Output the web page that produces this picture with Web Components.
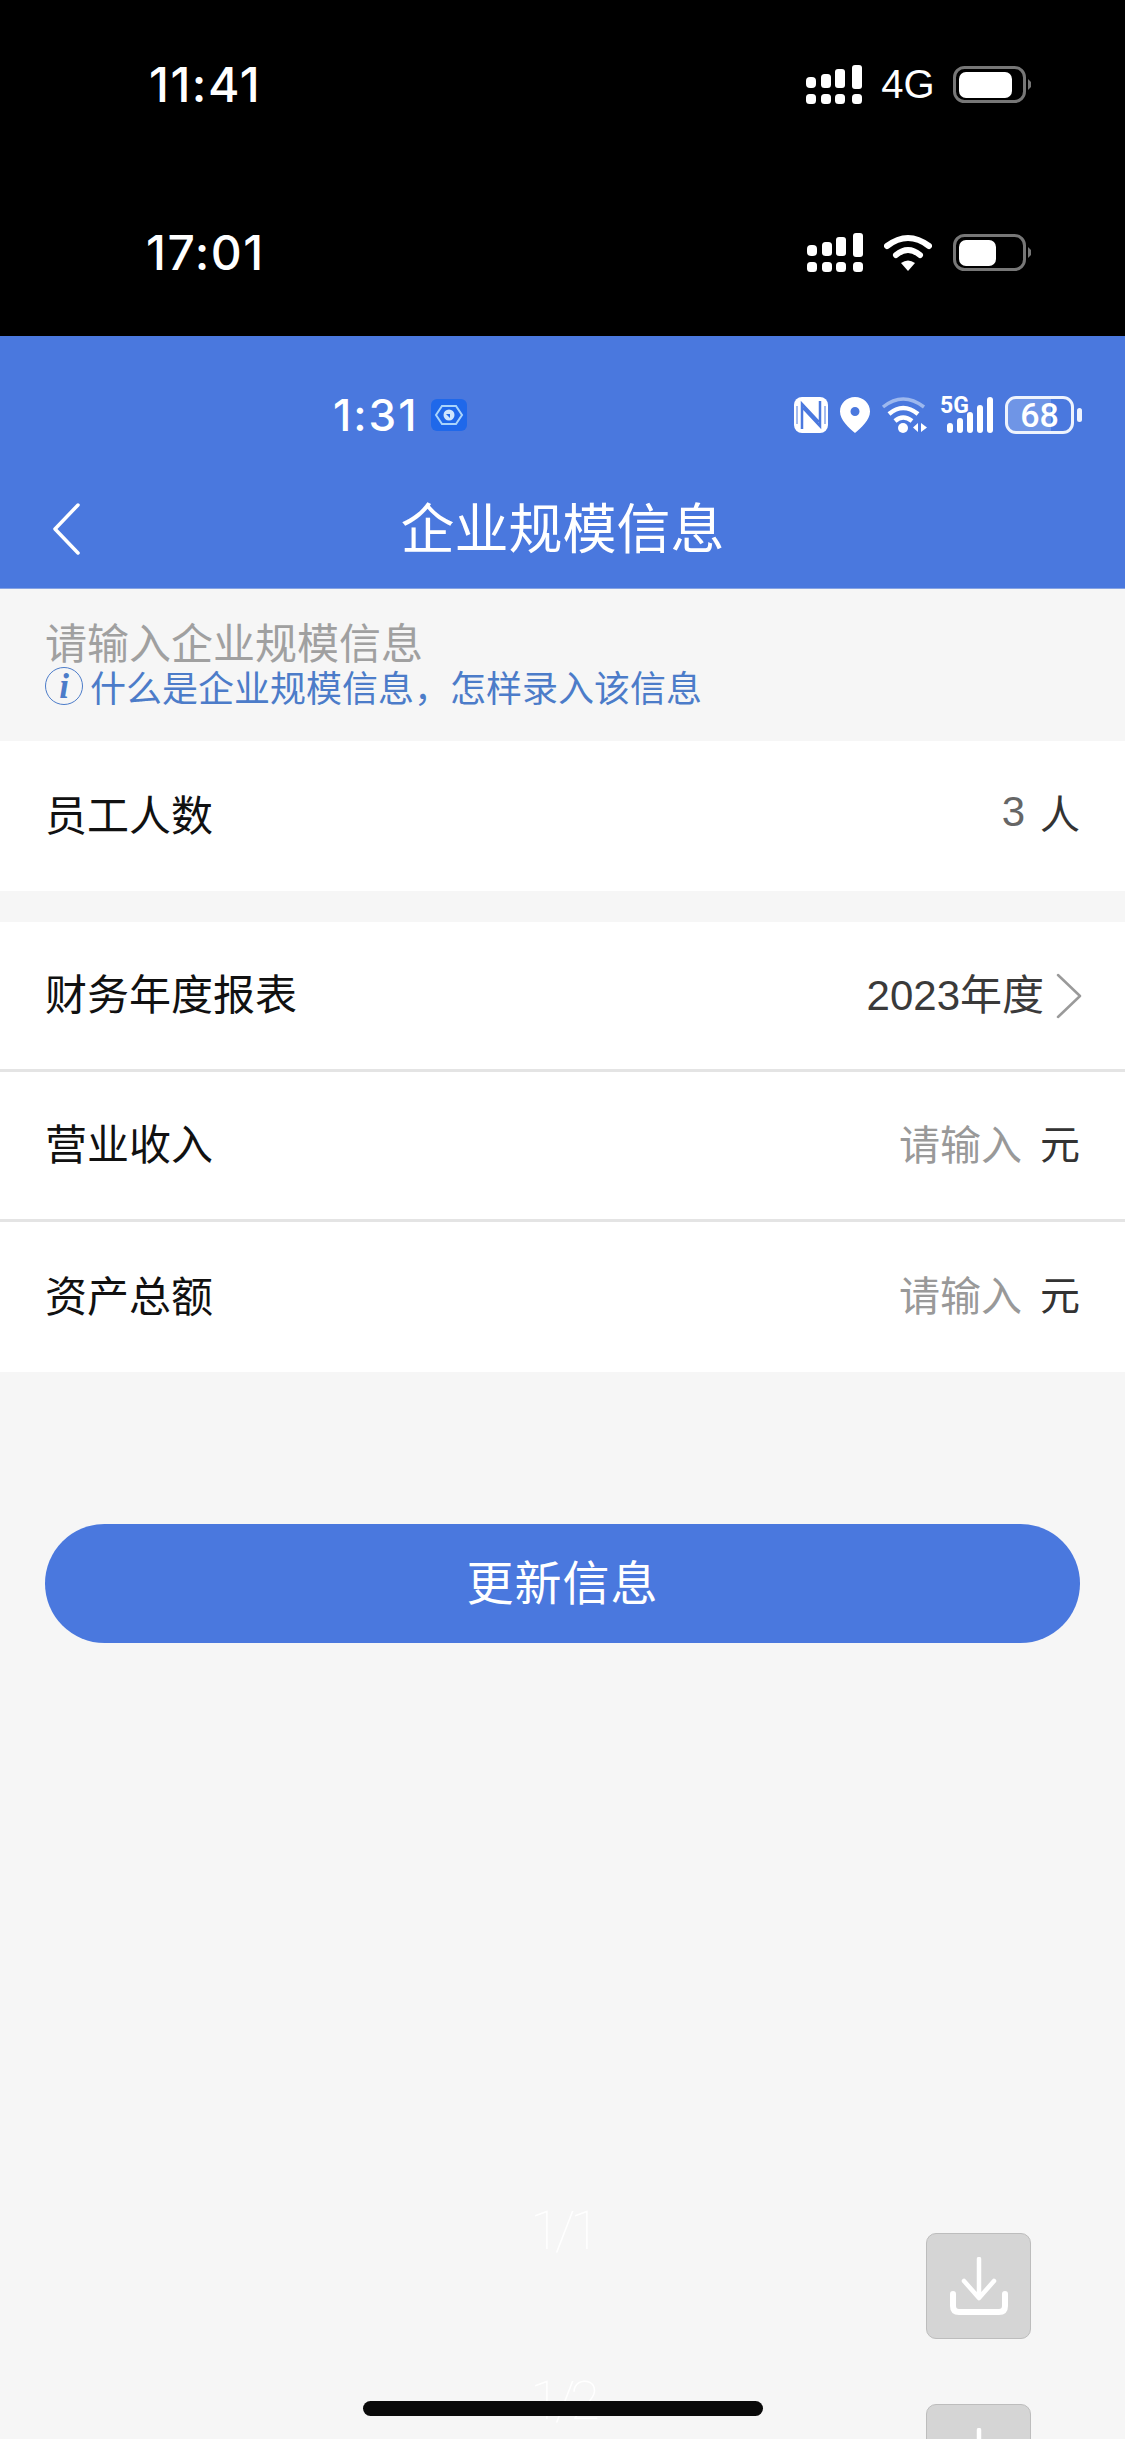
<!doctype html>
<html lang="zh">
<head>
<meta charset="utf-8">
<title>企业规模信息</title>
<style>
html, body { margin: 0; padding: 0; background: #f6f6f6; }
body { font-family: "Noto Sans CJK SC", "Noto Sans", sans-serif; }
</style>
</head>
<body>

<page-shell>
  <ios-status time="11:41" mode="cell"></ios-status>
  <ios-status time="17:01" mode="wifi"></ios-status>
  <android-status time="1:31" level="68"></android-status>
  <nav-bar>企业规模信息</nav-bar>
  <hint-block link="什么是企业规模信息，怎样录入该信息">请输入企业规模信息</hint-block>

  <form-row label="员工人数" height="150"><span class="num">3</span><span class="unit">人</span></form-row>
  <form-row label="财务年度报表" height="147" style="margin-top:31px" line chevron><span class="year">2023年度</span></form-row>
  <form-row label="营业收入" height="147" line><span class="ph">请输入</span><span class="unit">元</span></form-row>
  <form-row label="资产总额" height="150"><span class="ph">请输入</span><span class="unit">元</span></form-row>

  <pill-button>更新信息</pill-button>

  <page-count style="top:2196px">1/1</page-count>
  <page-count style="top:2366px">1/2</page-count>
  <download-tile style="top:2233px"></download-tile>
  <download-tile style="top:2404px"></download-tile>
  <home-bar></home-bar>
</page-shell>

<script>
const UI_FONT = '"Inter", "Noto Sans", sans-serif'
const CJK_FONT = '"Noto Sans CJK SC", "Noto Sans", sans-serif'

class PageShell extends HTMLElement {
  constructor() {
    super()
    this.attachShadow({mode: 'open'}).innerHTML = `
<style>
:host {
  display: flex;
  flex-direction: column;
  position: relative;
  width: 1125px;
  height: 2439px;
  overflow: hidden;
  background: #f6f6f6;
  font-family: ${CJK_FONT};
}
</style>
<slot></slot>`
  }
}
customElements.define('page-shell', PageShell)

// Black top rows: four-column signal, 4G or wifi, and a battery.
class IosStatus extends HTMLElement {
  constructor() {
    super()
    const time = this.getAttribute('time')
    const wifi = this.getAttribute('mode') == 'wifi'
    const fill = wifi ? 37 : 53
    const middle = wifi
      ? `<svg class="wifi" width="48" height="37" viewBox="0 0 48 37">
           <path d="M3 12Q24 -4 45 12" fill="none" stroke="#fff" stroke-width="6" stroke-linecap="round"/>
           <path d="M12 21Q24 11 36 21" fill="none" stroke="#fff" stroke-width="6" stroke-linecap="round"/>
           <path d="M17 29Q24 24 31 29L24 37Z" fill="#fff"/>
         </svg>`
      : `<span class="net">4G</span>`
    this.attachShadow({mode: 'open'}).innerHTML = `
<style>
:host {
  display: flex;
  align-items: center;
  box-sizing: border-box;
  flex: none;
  height: 168px;
  padding: 0 94px 0 ${wifi ? 146 : 149}px;
  background: #000;
  color: #fff;
  font-family: ${UI_FONT};
}
.time { font-size: 48px; font-weight: 500; letter-spacing: 1.500px; }
.right { margin-left: auto; display: flex; align-items: center; }
.net { display: block; width: 56px; margin-left: 18px; margin-right: 17px; font-size: 40px; font-weight: 300; font-family: "Liberation Sans", sans-serif; text-align: center; }
.wifi { margin-left: 21px; margin-right: 21px; }
svg { display: block; }
</style>
<span class="time">${time}</span>
<div class="right">
  <svg width="56" height="39" viewBox="0 0 56 39" fill="#fff">
    <rect x="0" y="12" width="10" height="11" rx="4"/>
    <rect x="15" y="9" width="10" height="14" rx="3.5"/>
    <rect x="29" y="4" width="10" height="19" rx="3"/>
    <rect x="46" y="0" width="10" height="24" rx="3"/>
    <rect x="0" y="29" width="10" height="10" rx="3.5"/>
    <rect x="15" y="29" width="10" height="10" rx="3.5"/>
    <rect x="29" y="29" width="10" height="10" rx="3.5"/>
    <rect x="46" y="29" width="10" height="10" rx="3.5"/>
  </svg>
  ${middle}
  <svg width="78" height="37" viewBox="0 0 78 37">
    <rect x="1.5" y="1.5" width="70" height="34" rx="10" fill="none" stroke="#777" stroke-width="3"/>
    <rect x="6" y="6" width="${fill}" height="26" rx="7" fill="#fff"/>
    <path d="M75 13L78 16V21L75 24Z" fill="#777"/>
  </svg>
</div>`
  }
}
customElements.define('ios-status', IosStatus)

// Second status row, on the blue header.
class AndroidStatus extends HTMLElement {
  constructor() {
    super()
    const time = this.getAttribute('time')
    const level = this.getAttribute('level')
    this.attachShadow({mode: 'open'}).innerHTML = `
<style>
:host {
  display: flex;
  align-items: center;
  box-sizing: border-box;
  flex: none;
  height: 129px;
  padding: 28px 43px 0 333px;
  background: #4a78de;
  color: #fff;
  font-family: ${UI_FONT};
}
.time { font-size: 44px; font-weight: 500; letter-spacing: 2px; }
.app { margin-left: 13px; }
.right { margin-left: auto; display: flex; align-items: center; }
svg { display: block; flex: none; }
.five { position: relative; width: 54px; height: 36px; margin-left: 12px; }
.five span { position: absolute; left: 0; top: -3px; font: 700 23px/24px "Liberation Sans Narrow", "Roboto", sans-serif; }
.five svg { position: absolute; left: 7px; top: 0; }
.batt {
  position: relative;
  box-sizing: border-box;
  width: 69px;
  height: 38px;
  margin-left: 11px;
  border: 3px solid #eef3fd;
  border-radius: 11px;
  text-align: center;
  font: 500 34px/32px "Roboto", sans-serif;
  background: linear-gradient(90deg, #6f95e6 68%, transparent 68%);
  background-clip: padding-box;
}
.tip { width: 5px; height: 14px; margin-left: 3px; border-radius: 3px; background: #eef3fd; }
</style>
<span class="time">${time}</span>
<svg class="app" width="36" height="32" viewBox="0 0 36 32">
  <rect width="36" height="32" rx="6" fill="#1f68ea"/>
  <path d="M11 7H25L31 16L25 25H11L5 16Z" fill="none" stroke="#a9d4fb" stroke-width="2"/>
  <circle cx="18" cy="16" r="5.5" fill="#cfe6fd"/>
  <path d="M15 15H19V19Z" fill="#1f68ea"/>
</svg>
<div class="right">
  <svg width="34" height="36" viewBox="0 0 34 36">
    <rect width="34" height="36" rx="8" fill="#fff"/>
    <path d="M8 32V7L25 25M26 4V29L9 11" fill="none" stroke="#4a78de" stroke-width="2.500"/>
    <path d="M3 9V27M31 9V27" stroke="#4a78de" stroke-width="1"/>
  </svg>
  <svg width="30" height="36" viewBox="0 0 30 36" style="margin-left:12px">
    <path fill-rule="evenodd" d="M15 0C23.5 0 30 6.500 30 14.500C30 23 21 31 15 36C9 31 0 23 0 14.500C0 6.500 6.500 0 15 0ZM15 10A4.500 4.500 0 1 0 15 19A4.500 4.500 0 1 0 15 10Z" fill="#fff"/>
  </svg>
  <svg width="47" height="36" viewBox="0 0 47 36" style="margin-left:11px">
    <path d="M2 10Q22 -6 43 10" fill="none" stroke="#9db8ee" stroke-width="3.500"/>
    <path d="M8 17Q22 5 37 17" fill="none" stroke="#fff" stroke-width="4.500"/>
    <path d="M14 24Q22 17 31 24" fill="none" stroke="#fff" stroke-width="4.500"/>
    <circle cx="22" cy="31" r="5" fill="#fff"/>
    <path d="M37 26L32 30.500L37 35ZM40 26L46 30.500L40 35Z" fill="#fff"/>
  </svg>
  <div class="five">
    <span>5G</span>
    <svg width="47" height="36" viewBox="0 0 47 36" fill="#fff">
      <rect x="0" y="26" width="6" height="10" rx="3"/>
      <rect x="10" y="21" width="6" height="15" rx="3"/>
      <rect x="20" y="15" width="6" height="21" rx="3"/>
      <rect x="30" y="8" width="6" height="28" rx="3"/>
      <rect x="40" y="0" width="6" height="36" rx="3"/>
    </svg>
  </div>
  <div class="batt">${level}</div>
  <div class="tip"></div>
</div>`
  }
}
customElements.define('android-status', AndroidStatus)

class NavBar extends HTMLElement {
  constructor() {
    super()
    this.attachShadow({mode: 'open'}).innerHTML = `
<style>
:host {
  display: grid;
  grid-template-columns: 1fr auto 1fr;
  align-items: center;
  box-sizing: border-box;
  flex: none;
  height: 124px;
  background: #4a78de;
  border-bottom: 1px solid #86a3e3;
  color: #fff;
}
.back { padding: 4px 0 0 51px; }
svg { display: block; }
.title { font-size: 54px; line-height: 60px; font-weight: 400; padding-bottom: 2px; }
</style>
<div class="back">
  <svg width="30" height="52" viewBox="0 0 30 52">
    <path d="M27 2L4 26L27 50" fill="none" stroke="#fff" stroke-width="3.500" stroke-linecap="round" stroke-linejoin="round"/>
  </svg>
</div>
<div class="title"><slot></slot></div>
<div></div>`
  }
}
customElements.define('nav-bar', NavBar)

class HintBlock extends HTMLElement {
  constructor() {
    super()
    this.attachShadow({mode: 'open'}).innerHTML = `
<style>
:host {
  display: block;
  box-sizing: border-box;
  flex: none;
  height: 152px;
  padding: 29px 0 0 45px;
  color: #a0a0a0;
  font-size: 42px;
  line-height: 46px;
}
.link { display: flex; align-items: center; gap: 7px; margin-top: -1px; color: #4c7cc9; font-size: 36px; line-height: 46px; }
.icon {
  display: flex;
  align-items: center;
  justify-content: center;
  box-sizing: border-box;
  width: 38px;
  height: 38px;
  border: 1.500px solid #4c7cc9;
  border-radius: 50%;
  font: italic 700 35px/1 "Liberation Serif", serif;
}
</style>
<div><slot></slot></div>
<div class="link"><span class="icon">i</span><span></span></div>`
    this.shadowRoot.querySelector('.link span:last-child').textContent = this.getAttribute('link')
  }
}
customElements.define('hint-block', HintBlock)

// One white row of the form: label on the left, slotted value on the right.
class FormRow extends HTMLElement {
  constructor() {
    super()
    const chevron = this.hasAttribute('chevron')
      ? `<svg width="26" height="46" viewBox="0 0 26 46"><path d="M2 2L24 23L2 44" fill="none" stroke="#9a9a9a" stroke-width="2.500" stroke-linecap="round" stroke-linejoin="round"/></svg>`
      : ''
    this.attachShadow({mode: 'open'}).innerHTML = `
<style>
:host {
  display: flex;
  align-items: center;
  box-sizing: border-box;
  flex: none;
  height: ${this.getAttribute('height')}px;
  padding: 0 45px 8px 45px;
  background: #fff;
  color: #111;
  font-size: 42px;
}
:host([line]) { height: ${Number(this.getAttribute('height')) + 3}px; border-bottom: 3px solid #e4e4e4; }
:host([chevron]) { padding-right: 43px; }
.value { margin-left: auto; display: flex; align-items: center; gap: 12px; }
svg { display: block; margin-top: 8px; }
::slotted(.num) { color: #666; font-family: "Liberation Sans", sans-serif; font-size: 42px; margin-right: -3px; }
::slotted(.unit) { color: #333; font-size: 40px; margin-left: 6px; }
::slotted(.year) { color: #3a3a3a; font-family: "Liberation Sans", ${CJK_FONT}; font-size: 42px; }
::slotted(.ph) { color: #999; font-size: 41px; }
</style>
<span>${this.getAttribute('label')}</span>
<div class="value"><slot></slot>${chevron}</div>`
  }
}
customElements.define('form-row', FormRow)

class PillButton extends HTMLElement {
  constructor() {
    super()
    this.attachShadow({mode: 'open'}).innerHTML = `
<style>
:host {
  display: flex;
  align-items: center;
  justify-content: center;
  box-sizing: border-box;
  flex: none;
  height: 119px;
  margin: 152px 45px 0;
  padding-bottom: 9px;
  border-radius: 60px;
  background: #4a78de;
  color: #fff;
  font-size: 47px;
  letter-spacing: 1px;
}
</style>
<slot></slot>`
  }
}
customElements.define('pill-button', PillButton)

// Pale page counter lying over the empty background.
class PageCount extends HTMLElement {
  constructor() {
    super()
    this.attachShadow({mode: 'open'}).innerHTML = `
<style>
:host {
  display: block;
  position: absolute;
  left: 0;
  right: 0;
  text-align: center;
  color: #fff;
  letter-spacing: -5px;
  font: 100 54px/70px "Roboto", sans-serif;
}
</style>
<slot></slot>`
  }
}
customElements.define('page-count', PageCount)

class DownloadTile extends HTMLElement {
  constructor() {
    super()
    this.attachShadow({mode: 'open'}).innerHTML = `
<style>
:host {
  display: flex;
  justify-content: center;
  box-sizing: border-box;
  position: absolute;
  left: 926px;
  width: 105px;
  height: 106px;
  padding-top: 23px;
  border: 1.500px solid #bdbdbd;
  border-radius: 10px;
  background: #d5d5d5;
}
svg { display: block; }
</style>
<svg width="58" height="58" viewBox="0 0 58 58">
  <path d="M29 2V40M14 24L29 41L44 24" fill="none" stroke="#fff" stroke-width="4.500" stroke-linecap="round" stroke-linejoin="round"/>
  <path d="M3 37V49Q3 55 9 55H49Q55 55 55 49V37" fill="none" stroke="#fff" stroke-width="6" stroke-linecap="round"/>
</svg>`
  }
}
customElements.define('download-tile', DownloadTile)

class HomeBar extends HTMLElement {
  constructor() {
    super()
    this.attachShadow({mode: 'open'}).innerHTML = `
<style>
:host {
  display: block;
  position: absolute;
  left: 363px;
  top: 2401px;
  width: 400px;
  height: 15px;
  border-radius: 8px;
  background: #0a0a0a;
}
</style>`
  }
}
customElements.define('home-bar', HomeBar)
</script>
</body>
</html>
